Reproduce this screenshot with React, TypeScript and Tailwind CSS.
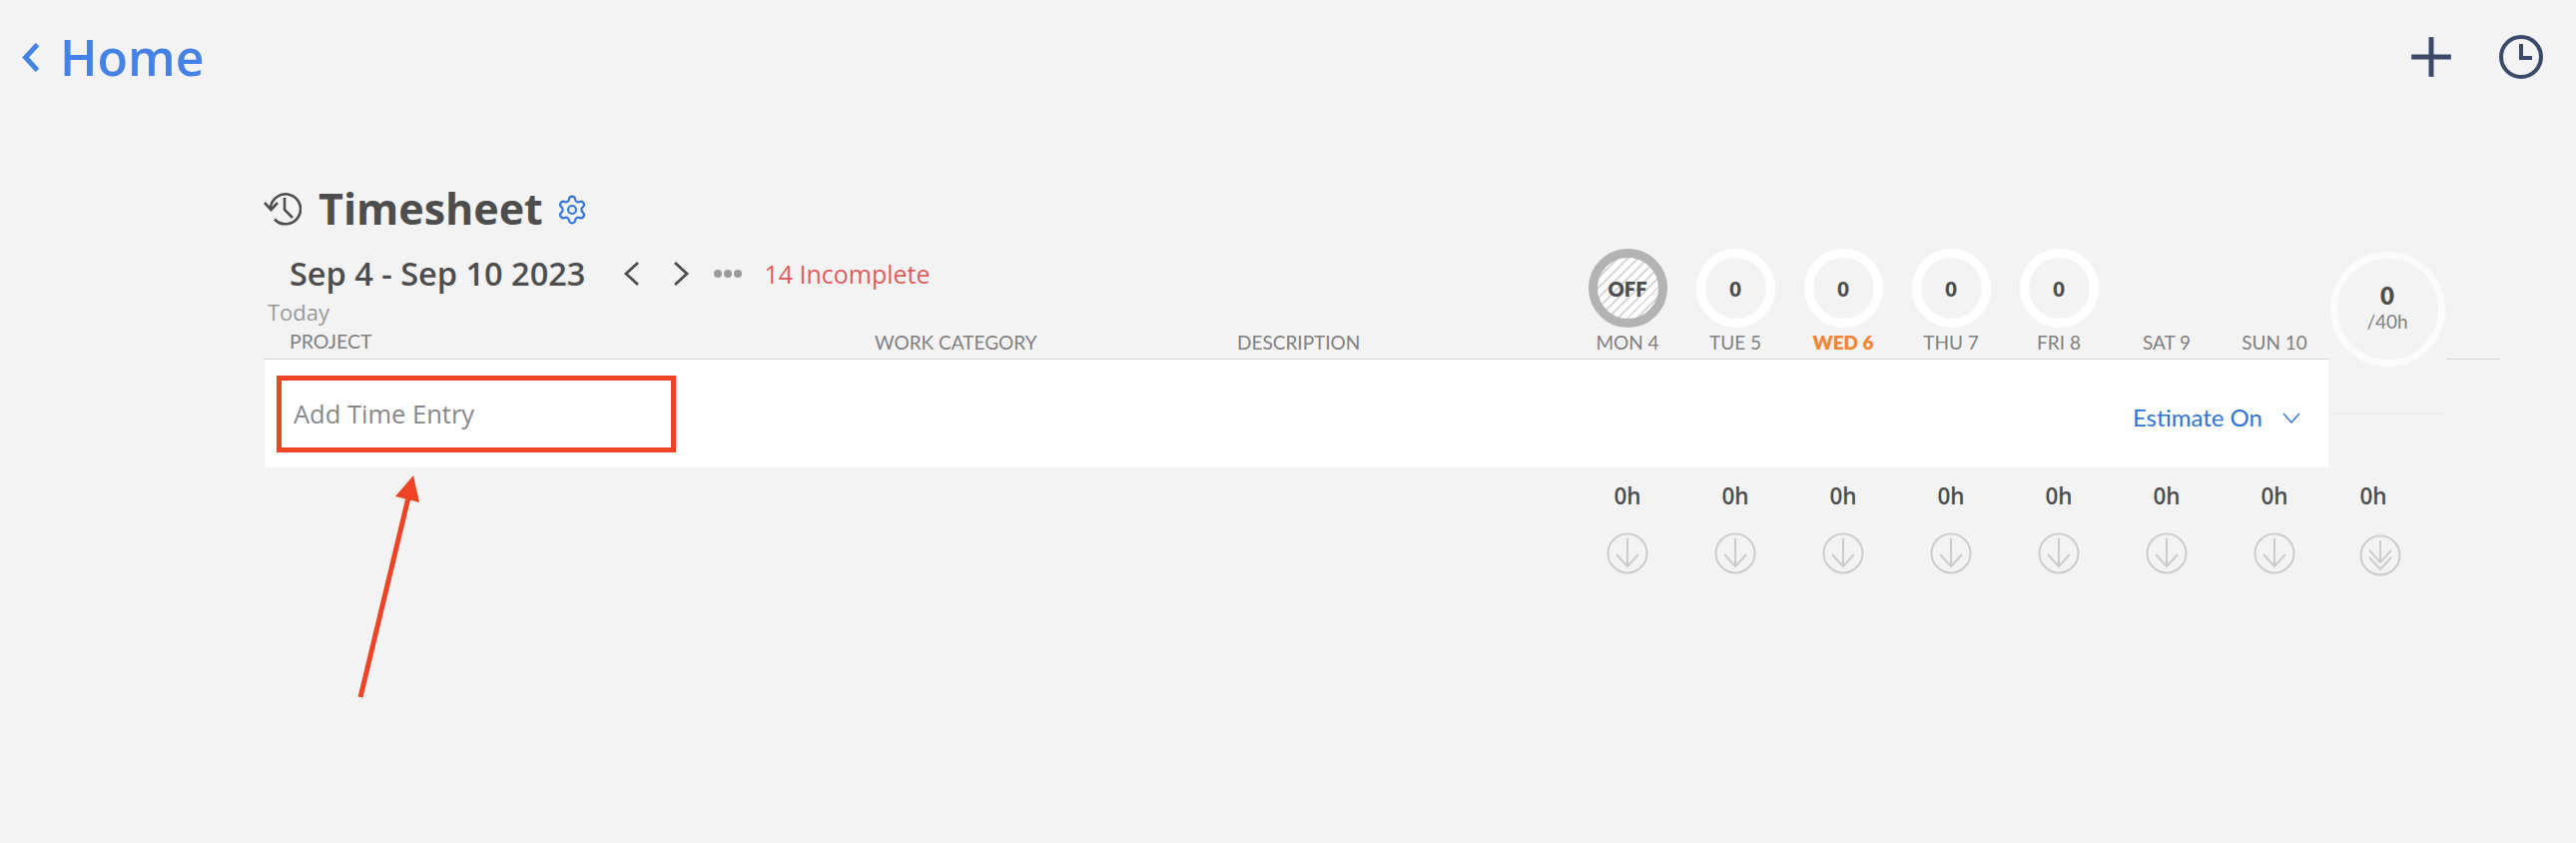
import { Plus, Settings } from "lucide-react";

const days = [
  { label: "MON 4", value: "OFF" },
  { label: "TUE 5", value: "0" },
  { label: "WED 6", value: "0", today: true },
  { label: "THU 7", value: "0" },
  { label: "FRI 8", value: "0" },
  { label: "SAT 9" },
  { label: "SUN 10" },
];

const proxima = "font-['Lato','Liberation_Sans',sans-serif]";

function ClockIcon() {
  return (
    <svg width="46" height="46" viewBox="0 0 46 46" fill="none" stroke="#3b4a68" strokeWidth="4">
      <circle cx="23" cy="23" r="20" />
      <path d="M23 10v14h11" />
    </svg>
  );
}

function HistoryIcon() {
  return (
    <svg width="38" height="34" viewBox="0 0 38 34" fill="none" stroke="#4d4d4d" strokeWidth="2.6">
      <path d="M7 17A15 15 0 1 1 11 27.5" />
      <path d="M1 11l6.5 7 6.5-7" />
      <path d="M21 6v12l8 8" />
    </svg>
  );
}

function Chevron({ dir, w, h, stroke }: { dir: "left" | "right"; w: number; h: number; stroke: number }) {
  const m = stroke / 1.4;
  return (
    <svg width={w} height={h} viewBox={`0 0 ${w} ${h}`} fill="none" stroke="currentColor" strokeWidth={stroke}>
      {dir === "left" ? (
        <path d={`M${w - m} ${m}L${m + 1} ${h / 2}L${w - m} ${h - m}`} />
      ) : (
        <path d={`M${m} ${m}L${w - m - 1} ${h / 2}L${m} ${h - m}`} />
      )}
    </svg>
  );
}

function DownIcon({ double }: { double?: boolean }) {
  return (
    <svg width="42" height="42" viewBox="0 0 42 42" fill="none" stroke="#cccccc" strokeWidth="2">
      <circle cx="21" cy="21" r="19.5" />
      {double ? (
        <path d="M21 6v22M10 16l11 12 11-12M10 23l11 12 11-12" />
      ) : (
        <path d="M21 6v28M10 22l11 12 11-12" />
      )}
    </svg>
  );
}

export default function App() {
  return (
    <div className="relative min-h-[844px] w-full bg-[#f3f3f3] font-['Open_Sans',sans-serif] text-[#4d4d4d]">
      <div className="flex h-[114px] items-center justify-between">
        <div className="flex items-center pl-[21px] text-[#4482e6]">
          <Chevron dir="left" w={20} h={33} stroke={5} />
          <span className="ml-[19px] text-[50px] font-semibold leading-none">Home</span>
        </div>
        <div className="flex items-center pr-[32px]">
          <Plus size={68} strokeWidth={1.76} strokeLinecap="butt" color="#3b4a68" />
          <div className="ml-[33px]">
            <ClockIcon />
          </div>
        </div>
      </div>

      <div className="ml-[264px] mt-[66px] w-[2240px]">
        <div className="flex h-[58px] items-center">
          <HistoryIcon />
          <h1 className="-mt-[2px] ml-[17px] text-[43px] font-bold leading-none">Timesheet</h1>
          <Settings size={32} strokeWidth={1.6} color="#2f74d6" className="ml-[13px] mt-[2px]" />
        </div>

        <div className="mt-[11px] flex h-[111px]">
          <div className="flex w-[1312px] flex-col border-b border-[#d5d5d5]">
            <div className="flex h-[50px] items-center pl-[26px]">
              <span className="text-[32.5px] font-semibold leading-none">Sep 4 - Sep 10 2023</span>
              <div className="ml-[38px]">
                <Chevron dir="left" w={17} h={26} stroke={2.8} />
              </div>
              <div className="ml-[33px]">
                <Chevron dir="right" w={17} h={26} stroke={2.8} />
              </div>
              <div className="ml-[24px] flex gap-[2px]">
                <span className="h-[8px] w-[8px] rounded-full bg-[#9a9a9a]" />
                <span className="h-[8px] w-[8px] rounded-full bg-[#9a9a9a]" />
                <span className="h-[8px] w-[8px] rounded-full bg-[#9a9a9a]" />
              </div>
              <span className="ml-[22px] text-[25px] leading-none text-[#e05d5d]">14 Incomplete</span>
            </div>
            <div className="flex h-[26px] items-center pl-[4px] text-[22px] leading-none text-[#999999]">Today</div>
            <div className={`flex h-[34px] items-center pl-[26px] text-[19.5px] leading-none text-[#808080] ${proxima}`}>
              <span className="w-[586px]">PROJECT</span>
              <span className="w-[363px] text-[19px]">WORK CATEGORY</span>
              <span className="text-[19px]">DESCRIPTION</span>
            </div>
          </div>
          <div className="flex w-[756px] border-b border-[#d5d5d5]">
            {days.map((d) => (
              <div key={d.label} className="flex w-[108px] flex-col items-center">
                <div className="h-[79px]">
                  {d.value === "OFF" && (
                    <div className="flex h-[79px] w-[79px] items-center justify-center rounded-full border-[9px] border-[#b3b3b3] bg-[repeating-linear-gradient(135deg,#d9d9d9_0,#d9d9d9_2px,#ffffff_2px,#ffffff_7px)]">
                      <span className={`text-[20px] font-extrabold leading-none ${proxima}`}>OFF</span>
                    </div>
                  )}
                  {d.value === "0" && (
                    <div className="flex h-[79px] w-[79px] items-center justify-center rounded-full border-[9px] border-white">
                      <span className={`text-[20px] font-extrabold leading-none ${proxima}`}>0</span>
                    </div>
                  )}
                </div>
                <span
                  className={`flex h-[29px] items-center text-[19px] leading-none ${proxima} ${
                    d.today ? "font-extrabold text-[#f28533]" : "text-[#808080]"
                  }`}
                >
                  {d.label}
                </span>
              </div>
            ))}
          </div>
          <div className="flex w-[118px] justify-center pt-[3px]">
            <div className="flex h-[115px] w-[115px] shrink-0 flex-col items-center justify-center rounded-full border-[7px] border-[#fbfbfb] pb-[5px]">
              <span className={`text-[24px] font-extrabold leading-none ${proxima}`}>0</span>
              <span className={`mt-[4px] text-[19px] leading-none text-[#808080] ${proxima}`}>/40h</span>
            </div>
          </div>
          <div className="w-[54px] border-b border-[#d5d5d5]" />
        </div>

        <div className="flex">
          <div className="ml-[1px] flex h-[108px] w-[2067px] items-start bg-white pl-[12px] pt-[16px]">
            <div className="flex h-[77px] w-[400px] items-center border-[5px] border-[#ee4325] pl-[12px] text-[25.5px] text-[#888888]">
              Add Time Entry
            </div>
            <div className="ml-auto mr-[28px] mt-[24px] flex h-[36px] items-center text-[24px] text-[#2f74d6]">
              <span className={proxima}>Estimate On</span>
              <svg className="ml-[20px]" width="18" height="11" viewBox="0 0 18 11" fill="none" stroke="currentColor" strokeWidth="1.4">
                <path d="M1 1l8 9 8-9" />
              </svg>
            </div>
          </div>
          <div className="h-[55px] w-[118px] border-b-2 border-[#efefef]" />
        </div>

        <div className="ml-[1312px] flex pt-[14px]">
          {days.map((d) => (
            <div key={d.label} className="flex w-[108px] flex-col items-center">
              <span className="h-[30px] text-[22.5px] font-semibold leading-[30px]">0h</span>
              <div className="mt-[21px]">
                <DownIcon />
              </div>
            </div>
          ))}
          <div className="flex w-[90px] flex-col items-center">
            <span className="h-[30px] text-[22.5px] font-semibold leading-[30px]">0h</span>
            <div className="ml-[14px] mt-[23px]">
              <DownIcon double />
            </div>
          </div>
        </div>
      </div>

      {/* annotation arrow */}
      <svg className="absolute left-[340px] top-[470px]" width="100" height="235" viewBox="0 0 100 235" fill="none">
        <path d="M21 228L70 24" stroke="#ee4325" strokeWidth="5" />
        <path d="M74 6L56 27L80 33Z" fill="#ee4325" />
      </svg>
    </div>
  );
}
